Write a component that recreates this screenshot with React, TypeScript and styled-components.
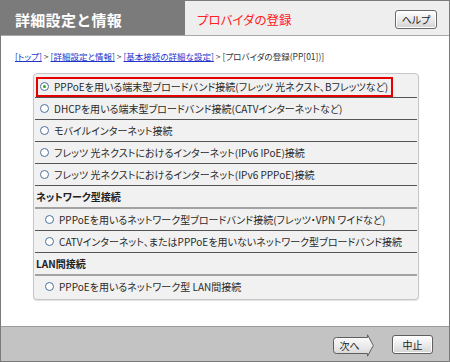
import React from "react";
import styled, { createGlobalStyle } from "styled-components";

const GlobalStyle = createGlobalStyle`
  html, body { margin: 0; padding: 0; background: #fff; }
  body { font-family: "Noto Sans CJK JP", "Noto Sans", sans-serif; }
  * { box-sizing: border-box; }
`;

const JP = `"Noto Sans CJK JP", "Liberation Sans", sans-serif`;

const Frame = styled.div`
  width: 450px;
  height: 362px;
  border: 1px solid #7a7a7a;
  display: flex;
  flex-direction: column;
  background: #fff;
  font-family: ${JP};
  overflow: hidden;
`;

const Header = styled.header`
  height: 35px;
  flex: none;
  display: flex;
  align-items: stretch;
  background: #eeeeee;
  border-bottom: 1px solid #a8a8a8;
`;

const TitleBlock = styled.div`
  width: 184px;
  background: #7b7b7b;
  color: #fff;
  font-size: 15px;
  font-weight: bold;
  display: flex;
  align-items: center;
  padding: 3px 0 0 14px;
  letter-spacing: 0.3px;
`;

const SubTitle = styled.div`
  color: #ff2020;
  font-size: 12.5px;
  display: flex;
  align-items: center;
  padding: 3px 0 0 12px;
  font-feature-settings: "palt";
`;

const HelpButton = styled.button`
  margin: 9px 12px 0 auto;
  width: 42px;
  height: 19px;
  padding: 0;
  border: 1px solid #6a6a6a;
  border-radius: 3px;
  background: linear-gradient(#ffffff, #e6e6e6 60%, #d2d2d2);
  box-shadow: inset 0 0 0 1px #fff;
  font-family: ${JP};
  font-size: 10px;
  color: #222;
  font-feature-settings: "palt";
`;

const Content = styled.main`
  flex: 1;
  background: #fff;
  display: flex;
  flex-direction: column;
  padding: 14px 0 0 14px;
`;

const Breadcrumb = styled.div`
  font-size: 8.5px;
  line-height: 12px;
  color: #333;
  font-feature-settings: "palt";
  white-space: nowrap;
`;

const Crumb = styled.a`
  color: #2233cc;
  text-decoration: underline;
`;

const Sep = styled.span`
  color: #555;
  margin: 0 2px;
`;

const Panel = styled.div`
  margin: 11px 0 0 18px;
  width: 386px;
  background: #f1f1f1;
  border: 1px solid #c6c6c6;
  border-radius: 4px;
  padding: 2px 1px 2px 1px;
  box-shadow: 0 1px 1px rgba(0, 0, 0, 0.12);
`;

const Row = styled.div<{ $last?: boolean; $indent?: boolean }>`
  height: ${(p) => (p.$last ? 21 : 22)}px;
  display: flex;
  align-items: center;
  padding-left: ${(p) => (p.$indent ? 10 : 5)}px;
  border-bottom: ${(p) => (p.$last ? "none" : "1px solid #555")};
  font-size: 10px;
  color: #2a2a2a;
  font-feature-settings: "palt";
  white-space: nowrap;
`;

const Heading = styled.div`
  height: 23px;
  display: flex;
  align-items: center;
  padding-left: 1px;
  border-bottom: 2px solid #a2a2a2;
  font-size: 10px;
  font-weight: bold;
  color: #222;
  font-feature-settings: "palt";
`;

const Highlight = styled.div`
  display: flex;
  align-items: center;
  height: 20px;
  margin-left: -4px;
  padding: 0 3px 0 2px;
  border: 2px solid #e60000;
`;

const Radio = styled.span<{ $checked?: boolean }>`
  width: 9px;
  height: 9px;
  flex: none;
  border-radius: 50%;
  border: 1px solid #4d6f9f;
  background: #fff;
  margin-right: 5px;
  display: flex;
  align-items: center;
  justify-content: center;
  &::after {
    content: "";
    display: ${(p) => (p.$checked ? "block" : "none")};
    width: 3px;
    height: 3px;
    border-radius: 50%;
    background: #28a428;
  }
`;

const Footer = styled.footer`
  height: 35px;
  flex: none;
  background: #c3c3c3;
  border-top: 1px solid #9a9a9a;
  display: flex;
  align-items: center;
  justify-content: flex-end;
  padding: 0 16px 0 0;
  gap: 18px;
`;

const NextButton = styled.button`
  position: relative;
  width: 41px;
  height: 23px;
  padding: 0 8px 0 0;
  border: none;
  background: transparent;
  font-family: ${JP};
  font-size: 10px;
  color: #222;
  margin-top: 2px;
  font-feature-settings: "palt";
  svg {
    position: absolute;
    inset: 0;
  }
  span {
    position: relative;
  }
`;

const StopButton = styled.button`
  width: 41px;
  height: 19px;
  padding: 0;
  border: 1px solid #5f5f5f;
  border-radius: 3px;
  background: linear-gradient(#ffffff, #e8e8e8 60%, #d4d4d4);
  box-shadow: inset 0 0 0 1px #fff;
  font-family: ${JP};
  font-size: 10px;
  color: #222;
  margin-top: 1px;
`;

const items1 = [
  "DHCPを用いる端末型ブロードバンド接続(CATVインターネットなど)",
  "モバイルインターネット接続",
  "フレッツ 光ネクストにおけるインターネット(IPv6 IPoE)接続",
  "フレッツ 光ネクストにおけるインターネット(IPv6 PPPoE)接続",
];

export default function App() {
  return (
    <>
      <GlobalStyle />
      <Frame>
        <Header>
          <TitleBlock>詳細設定と情報</TitleBlock>
          <SubTitle>プロバイダの登録</SubTitle>
          <HelpButton>ヘルプ</HelpButton>
        </Header>
        <Content>
          <Breadcrumb>
            <Crumb>[トップ]</Crumb>
            <Sep>&gt;</Sep>
            <Crumb>[詳細設定と情報]</Crumb>
            <Sep>&gt;</Sep>
            <Crumb>[基本接続の詳細な設定]</Crumb>
            <Sep>&gt;</Sep>
            <span>[プロバイダの登録(PP[01])]</span>
          </Breadcrumb>
          <Panel>
            <Row>
              <Highlight>
                <Radio $checked />
                PPPoEを用いる端末型ブロードバンド接続(フレッツ 光ネクスト、Bフレッツなど)
              </Highlight>
            </Row>
            {items1.map((t) => (
              <Row key={t}>
                <Radio />
                {t}
              </Row>
            ))}
            <Heading>ネットワーク型接続</Heading>
            <Row $indent>
              <Radio />
              PPPoEを用いるネットワーク型ブロードバンド接続(フレッツ・VPN ワイドなど)
            </Row>
            <Row $indent>
              <Radio />
              CATVインターネット、またはPPPoEを用いないネットワーク型ブロードバンド接続
            </Row>
            <Heading>LAN間接続</Heading>
            <Row $indent $last>
              <Radio />
              PPPoEを用いるネットワーク型 LAN間接続
            </Row>
          </Panel>
        </Content>
        <Footer>
          <NextButton>
            <svg width="41" height="23" viewBox="0 0 41 23">
              <defs>
                <linearGradient id="ng" x1="0" y1="0" x2="0" y2="1">
                  <stop offset="0" stopColor="#ffffff" />
                  <stop offset="0.6" stopColor="#e8e8e8" />
                  <stop offset="1" stopColor="#d2d2d2" />
                </linearGradient>
              </defs>
              <path
                d="M3.5 3.5 H34.5 V0.8 L40.3 11.5 L34.5 22.2 V19.5 H3.5 Q0.5 19.5 0.5 16.5 V6.5 Q0.5 3.5 3.5 3.5 Z"
                fill="url(#ng)"
                stroke="#5f5f5f"
                strokeWidth="1"
              />
            </svg>
            <span>次へ</span>
          </NextButton>
          <StopButton>中止</StopButton>
        </Footer>
      </Frame>
    </>
  );
}
